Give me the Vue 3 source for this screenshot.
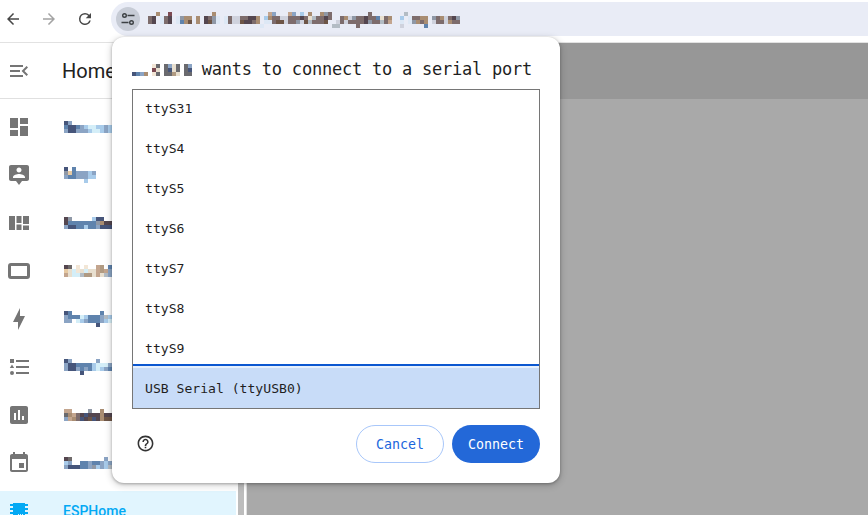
<script setup>
const palette = {
  a: '#7d6c6c', b: '#54464f', c: '#a98d72', d: '#cfd2dd', e: '#dde8f5', f: '#8ba4c4', g: '#5f83ad',
  h: '#46557a', i: '#a8cbea', j: '#d4eef8', k: '#e6c9a2', l: '#c3a58e', m: '#8f98a6', n: '#6f6a6a',
  o: '#b3bcc4', p: '#6d5546', q: '#e8dfcf', r: '#6a6a6e', s: '#7d4a52', t: '#f2e6d6', u: '#b09a82'
}
const cells = (rows) => {
  const out = []
  rows.forEach((row, y) => {
    ;[...row].forEach((ch, x) => {
      if (palette[ch]) out.push({ x: x * 4, y: y * 4, fill: palette[ch] })
    })
  })
  return out
}
const blur = (rows) => ({ w: Math.max(...rows.map((r) => r.length)) * 4, h: rows.length * 4, cells: cells(rows) })

const urlBlur = blur([
  '..c..s..........' + 'c.............l' + 'f...lf.i.c..cma.........a........o..............',
  'ab.eab.emcc.c.bame.eaddaabbc.icaaddaaabaqoaaba..acdmaabaagqac..i.eaacc.macdabm',
  'ab.eab.egcp.c.bpme.eaddpbbac.eeappdaamdpoaaap..dadaaaabmaaoal..e.emcac.daadcaa',
  '............................e.................oo....a..........d.....g........'
])
const titleBlur = blur([
  '.....tr.rfqr.rf',
  '.....sq.rhqr.rh',
  'hgfc.tr.rruq.rr'
])

const nav = [
  { d: 'M13,3V9H21V3M13,21H21V11H13M3,21H11V15H3M3,13H11V3H3V13Z', rows: ['hf..........', 'ghhgfijjiifi', 'fhhfffijjifi'] },
  { d: 'M20 2H4C2.890 2 2 2.890 2 4v12c0 1.100.89 2 2 2h5l3 4 3-4h5c1.100 0 2-.9 2-2V4c0-1.110-.9-2-2-2zm-8 2.500c1.400 0 2.500 1.100 2.500 2.500S13.400 9.500 12 9.500 9.500 8.400 9.500 7 10.600 4.500 12 4.500zM18 15H6v-.9c0-2 4-3.100 6-3.100s6 1.100 6 3.100v.9z', rows: ['h.g.....', 'mkgfffif', 'fggfffii', '.....i..'] },
  { d: 'M2 5h6v14H2zM9.500 5h5v7h-5zM9.500 13.500h5V19h-5zM16 5h6v8h-6zM16 14.500h6V19h-6z', rows: ['bm.....ihh..', 'bgggggggmcbb', 'fhhggiggfhhh'] },
  { d: 'M4 4h16a3 3 0 0 1 3 3v10a3 3 0 0 1-3 3H4a3 3 0 0 1-3-3V7a3 3 0 0 1 3-3zm0 3v10h16V7z', rows: ['bn.t.t..lu.g', 'kqjtqjqqlulf', 'lqjjouuqlqof'] },
  { d: 'M11 15H6L13 1V9H18L11 23V15Z', rows: ['hg.......g..', 'fgggjigggfoi', 'ff.jifgggfij', '........h...'] },
  { d: 'M3 4h4v4H3zM5 9.500L7.200 13H2.800zM5 16a2 2 0 1 1 0 4 2 2 0 0 1 0-4zM9 5h13v2H9zM9 11h13v2H9zM9 17h13v2H9z', rows: ['hf......f...', 'fhhggggijjjf', 'fhhfgfgijifg', '....h.......'] },
  { d: 'M19,3H5C3.900,3 3,3.900 3,5V19C3,20.100 3.900,21 5,21H19C20.100,21 21,20.100 21,19V5C21,3.900 20.100,3 19,3M9,17H7V10H9V17M13,17H11V7H13V17M17,17H15V13H17V17Z', rows: ['ll....m..c..', 'rclabhbbbcbb', 'flcahbphbcpp'] },
  { d: 'M17 12h-5v5h5v-5zM16 1v2H8V1H6v2H5c-1.110 0-1.990.9-1.990 2L3 19c0 1.100.89 2 2 2h14c1.100 0 2-.9 2-2V5c0-1.100-.9-2-2-2h-1V1h-2zm3 18H5V8h14v11z', rows: ['bn........f.', 'if..ggfggfif', 'fhhhggfmifio'] }
].map((n) => ({ ...n, blur: blur(n.rows) }))

const ports = ['ttyS31', 'ttyS4', 'ttyS5', 'ttyS6', 'ttyS7', 'ttyS8', 'ttyS9']
</script>

<template>
  <div class="screen">
    <header class="toolbar">
      <svg class="tool" viewBox="0 0 24 24"><path fill="#474747" d="M20 11H7.830l5.590-5.590L12 4l-8 8 8 8 1.410-1.410L7.830 13H20v-2z" /></svg>
      <svg class="tool" viewBox="0 0 24 24"><path fill="#a3a3a3" d="M4 11h12.170l-5.590-5.590L12 4l8 8-8 8-1.410-1.410L16.170 13H4v-2z" /></svg>
      <svg class="tool" viewBox="0 0 24 24"><path fill="#474747" d="M17.650 6.350A7.950 7.950 0 0 0 12 4a8 8 0 1 0 7.730 10h-2.080A6 6 0 1 1 12 6c1.660 0 3.140.690 4.220 1.780L13 11h7V4l-2.350 2.350z" /></svg>
      <div class="omnibox">
        <span class="chip">
          <svg width="16" height="16" viewBox="0 0 16 16" fill="none" stroke="#3c4043" stroke-width="1.400">
            <circle cx="4.500" cy="4.500" r="1.800" />
            <path d="M7.500 4.500h7M1.500 11.500h7" />
            <circle cx="11.500" cy="11.500" r="1.800" />
          </svg>
        </span>
        <svg class="blur" :width="urlBlur.w" :height="urlBlur.h">
          <rect v-for="(c, i) in urlBlur.cells" :key="i" :x="c.x" :y="c.y" width="4" height="4" :fill="c.fill" />
        </svg>
      </div>
    </header>

    <div class="body">
      <aside class="sidebar">
        <div class="side-head">
          <svg class="icon" viewBox="0 0 24 24"><path d="M21,15.610L19.590,17L14.580,12L19.590,7L21,8.390L17.440,12L21,15.610M3,6H16V8H3V6M3,13V11H13V13H3M3,18V16H16V18H3Z" /></svg>
          <span class="home">Home</span>
        </div>
        <div class="side-scroll">
          <nav class="nav">
            <div v-for="(n, i) in nav" :key="i" class="nav-item">
              <svg class="icon" viewBox="0 0 24 24"><path :d="n.d" /></svg>
              <svg class="blur" :width="n.blur.w" :height="n.blur.h">
                <rect v-for="(c, j) in n.blur.cells" :key="j" :x="c.x" :y="c.y" width="4" height="4" :fill="c.fill" />
              </svg>
            </div>
            <div class="nav-item active">
              <svg class="icon" viewBox="0 0 24 24"><path d="M6,4H18V5H21V7H18V9H21V11H18V13H21V15H18V17H21V19H18V20H6V19H3V17H6V15H3V13H6V11H3V9H6V7H3V5H6V4M11,15V18H12V15H11M13,15V18H14V15H13M15,15V18H16V15H15Z" /></svg>
              <span class="nav-label">ESPHome</span>
            </div>
          </nav>
          <div class="scrollbar"></div>
        </div>
      </aside>
      <main class="main">
        <div class="main-head"></div>
        <div class="main-body"></div>
      </main>
    </div>

    <section class="dialog">
      <h1 class="title">
        <svg class="blur" :width="titleBlur.w" :height="titleBlur.h">
          <rect v-for="(c, i) in titleBlur.cells" :key="i" :x="c.x" :y="c.y" width="4" height="4" :fill="c.fill" />
        </svg>
        <span>wants to connect to a serial port</span>
      </h1>
      <div class="list">
        <div v-for="p in ports" :key="p" class="port">{{ p }}</div>
        <div class="port selected">USB Serial (ttyUSB0)</div>
      </div>
      <div class="actions">
        <svg class="help" viewBox="0 0 24 24"><path d="M11 18h2v-2h-2v2zm1-16C6.480 2 2 6.480 2 12s4.480 10 10 10 10-4.480 10-10S17.520 2 12 2zm0 18c-4.410 0-8-3.590-8-8s3.590-8 8-8 8 3.590 8 8-3.590 8-8 8zm0-14c-2.210 0-4 1.790-4 4h2c0-1.100.9-2 2-2s2 .9 2 2c0 2-3 1.750-3 5h2c0-2.250 3-2.500 3-5 0-2.210-1.790-4-4-4z" /></svg>
        <button class="btn cancel">Cancel</button>
        <button class="btn connect">Connect</button>
      </div>
    </section>
  </div>
</template>

<style>
html, body { margin: 0; background: #fff; overflow: hidden; }
</style>

<style scoped>
.screen {
  position: relative;
  width: 868px;
  height: 515px;
  overflow: hidden;
  display: flex;
  flex-direction: column;
  background: #fff;
  font-family: "DejaVu Sans Mono", monospace;
}
.toolbar {
  height: 43px;
  flex: none;
  display: flex;
  align-items: flex-start;
  box-sizing: border-box;
  padding: 2px 0 0 4px;
  gap: 18px;
  border-bottom: 1px solid #e2e2e2;
}
.tool {
  width: 18px;
  height: 18px;
  flex: none;
  margin-top: 8px;
}
.omnibox {
  flex: 1;
  height: 34px;
  margin-left: -1px;
  background: #e9ecf6;
  border-radius: 17px 0 0 17px;
  display: flex;
  align-items: center;
  padding-left: 5px;
}
.chip {
  width: 24px;
  height: 24px;
  border-radius: 50%;
  background: #c7ccd6;
  display: flex;
  align-items: center;
  justify-content: center;
  flex: none;
}
.omnibox .blur { margin-left: 8px; align-self: flex-start; margin-top: 10px; }
.blur { display: block; flex: none; }
.body {
  flex: 1;
  min-height: 0;
  display: flex;
}
.sidebar {
  width: 246px;
  flex: none;
  display: flex;
  flex-direction: column;
  border-right: 1px solid #e0e0e0;
  overflow: hidden;
}
.side-head {
  height: 56px;
  flex: none;
  display: flex;
  align-items: center;
  box-sizing: border-box;
  border-bottom: 1px solid #e0e0e0;
  padding-left: 7px;
  gap: 31px;
}
.home {
  font: 400 20px "Roboto", sans-serif;
  color: #212121;
}
.icon {
  width: 24px;
  height: 24px;
  flex: none;
  fill: #757575;
}
.side-scroll {
  flex: 1;
  min-height: 0;
  display: flex;
}
.nav {
  width: 236px;
  flex: none;
  display: flex;
  flex-direction: column;
  gap: 8px;
  padding-top: 8px;
}
.nav-item {
  height: 40px;
  flex: none;
  display: flex;
  align-items: center;
  padding-left: 7px;
  gap: 33px;
}
.nav-item.active { background: #e1f5fe; gap: 32px; }
.nav-item.active .icon { fill: #03a9f4; }
.nav-label {
  font: 500 14px "Roboto", sans-serif;
  color: #03a9f4;
}
.scrollbar {
  width: 6px;
  margin-left: 2px;
  background: #bdbdbd;
}
.main {
  flex: 1;
  display: flex;
  flex-direction: column;
}
.main-head {
  height: 56px;
  background: #979797;
}
.main-body {
  flex: 1;
  background: #a9a9a9;
}
.dialog {
  position: absolute;
  left: 112px;
  top: 37px;
  width: 448px;
  height: 446px;
  box-sizing: border-box;
  padding: 22px 20px 20px;
  background: #fff;
  border-radius: 12px;
  box-shadow: 0 1px 3px rgba(0, 0, 0, .3), 0 2px 6px 2px rgba(0, 0, 0, .12);
  display: flex;
  flex-direction: column;
}
.title {
  margin: 0 0 10px;
  height: 20px;
  display: flex;
  align-items: center;
  justify-content: space-between;
  font-size: 17px;
  letter-spacing: -0.230px;
  font-weight: 400;
  line-height: 20px;
  color: #1f1f1f;
  padding-right: 8px;
}
.title .blur { margin-top: 2px; }
.list {
  height: 320px;
  flex: none;
  box-sizing: border-box;
  border: 1px solid #767676;
  overflow: hidden;
  display: flex;
  flex-direction: column;
  justify-content: flex-end;
}
.port {
  height: 40px;
  flex: none;
  display: flex;
  align-items: center;
  padding-left: 12px;
  font-size: 13.100px;
  color: #1f1f1f;
}
.port.selected {
  background: #c8dcf8;
  box-shadow: 0 -2px 0 #e6f0fd, 0 -4px 0 #0b57d0;
}
.actions {
  margin-top: 16px;
  display: flex;
  align-items: center;
  gap: 8px;
}
.help {
  width: 19px;
  height: 19px;
  margin-left: 4px;
  margin-bottom: 1px;
  margin-right: auto;
  fill: #333;
}
.btn {
  width: 88px;
  height: 38px;
  border-radius: 19px;
  box-sizing: border-box;
  font-family: "DejaVu Sans Mono", monospace;
  font-size: 13.300px;
  padding: 0;
}
.cancel {
  background: #fff;
  border: 1px solid #a8c7fa;
  color: #1a66dc;
}
.connect {
  background: #2368d8;
  border: none;
  color: #fff;
}
</style>
